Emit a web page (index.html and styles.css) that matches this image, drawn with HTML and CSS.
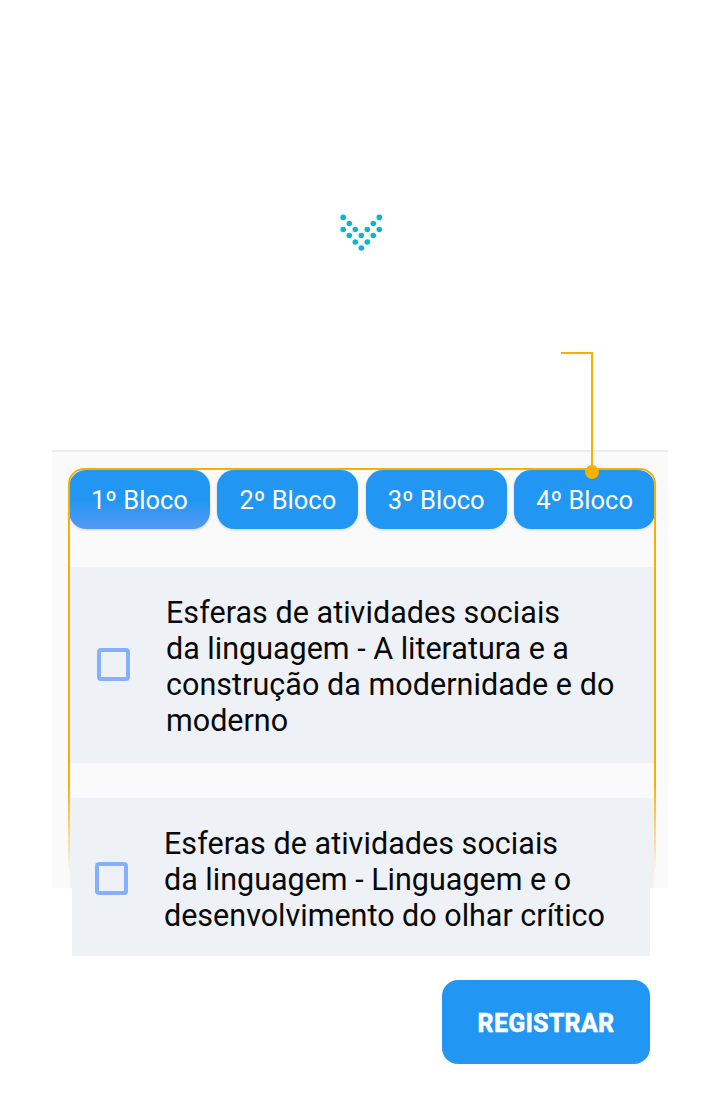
FILE: index.html
```html
<!DOCTYPE html>
<html lang="pt">
<head>
<meta charset="utf-8">
<title>Blocos</title>
<link rel="stylesheet" href="styles.css">
</head>
<body>
<main class="page">
  <header class="intro">
    <svg class="chevron" width="44" height="38" viewBox="0 0 44 38" fill="#00bcc8" aria-hidden="true">
      <circle cx="3.2" cy="3.4" r="2.8"/><circle cx="39.3" cy="3.4" r="2.8"/>
      <circle cx="9.3" cy="9.5" r="2.8"/><circle cx="33.3" cy="9.5" r="2.8"/>
      <circle cx="3.2" cy="15.5" r="2.8"/><circle cx="15.3" cy="15.5" r="2.8"/><circle cx="27.3" cy="15.5" r="2.8"/><circle cx="39.3" cy="15.5" r="2.8"/>
      <circle cx="9.3" cy="21.5" r="2.8"/><circle cx="21.3" cy="21.5" r="2.8"/><circle cx="33.3" cy="21.5" r="2.8"/>
      <circle cx="15.3" cy="28" r="2.8"/><circle cx="27.3" cy="28" r="2.8"/>
      <circle cx="21.3" cy="34" r="2.8"/>
    </svg>
  </header>
  <section class="panel">
    <nav class="tabs">
      <button class="tab tab-active">1º Bloco</button>
      <button class="tab">2º Bloco</button>
      <button class="tab">3º Bloco</button>
      <button class="tab">4º Bloco</button>
    </nav>
    <label class="card">
      <span class="box"></span>
      <span class="text"><span class="loose">Esferas de atividades sociais</span><br>da linguagem - A literatura e a<br><span class="loose">construção da modernidade e do</span><br>moderno</span>
    </label>
    <label class="card card-last">
      <span class="box"></span>
      <span class="text"><span class="loose">Esferas de atividades sociais</span><br>da linguagem - Linguagem e o<br>desenvolvimento do olhar crítico</span>
    </label>
    <svg class="callout" width="616" height="540" viewBox="52 350 616 540" fill="none" aria-hidden="true">
      <defs>
        <linearGradient id="fade" gradientUnits="userSpaceOnUse" x1="0" y1="468" x2="0" y2="877">
          <stop offset="0" stop-color="#f8b000"/><stop offset=".77" stop-color="#f8b000"/><stop offset="1" stop-color="#f8b000" stop-opacity="0"/>
        </linearGradient>
      </defs>
      <rect x="69" y="469" width="586" height="409" rx="15" stroke="url(#fade)" stroke-width="2"/>
      <path d="M561 353H592V472" stroke="#f8b000" stroke-width="2"/>
      <circle cx="592" cy="472" r="7" fill="#f8b000"/>
    </svg>
  </section>
  <footer class="actions"><button class="submit">REGISTRAR</button></footer>
</main>
</body>
</html>
```
FILE: styles.css
```css
* { box-sizing: border-box; }
body { margin: 0; background: #fff; font-family: Roboto, sans-serif; }
button { border: 0; font-family: inherit; color: #fff; padding: 0; }
.page { width: 720px; height: 1096px; overflow: hidden; }
.intro { height: 450px; padding: 214px 0 0 340px; }
.chevron { display: block; }
.panel {
  position: relative;
  width: 616px;
  height: 438px;
  margin-left: 52px;
  padding: 18px 14px 0 18px;
  border-top: 2px solid #e5edf9;
  background: #fafafa;
}
.tabs { display: flex; gap: 7.5px; width: 586px; margin-left: -1px; }
.tab {
  width: 141px;
  height: 59px;
  padding-top: 1px;
  border-radius: 17px;
  background: #2196f3;
  box-shadow: 0 1px 3px rgba(0, 0, 0, .16);
  font-size: 25.5px;
  line-height: 56px;
}
.tab-active { background: linear-gradient(#2196f3 50%, #5599f3); }
.card {
  display: flex;
  width: 584px;
  height: 196px;
  margin-top: 38px;
  padding: 27px 0 0 27px;
  background: #eef2f7;
}
.box {
  flex: none;
  width: 33px;
  height: 33px;
  margin-top: 54px;
  border: 4px solid #84b1ff;
  border-radius: 4px;
}
.text {
  margin: 1px 0 0 36px;
  font-size: 30.5px;
  line-height: 36px;
  color: #080808;
  white-space: nowrap;
}
.loose { letter-spacing: .04px; }
.card-last {
  height: 158px;
  margin-top: 35px;
  padding-left: 25px;
  background: linear-gradient(#eef2f7, #eef2f7) 2px 0 / 578px 100% no-repeat,
    linear-gradient(#eef2f7, #eef2f7) 0 0 / 100% 90px no-repeat;
}
.card-last .box { margin-top: 37px; }
.callout { position: absolute; left: 0; top: -102px; pointer-events: none; }
.actions { display: flex; justify-content: flex-end; padding: 92px 70px 0 0; }
.submit {
  width: 208px;
  height: 84px;
  padding-top: 2px;
  border-radius: 16px;
  background: #2196f3;
  font-size: 25px;
  font-weight: 800;
  letter-spacing: .2px;
  -webkit-text-stroke: .4px #fff;
}
```
